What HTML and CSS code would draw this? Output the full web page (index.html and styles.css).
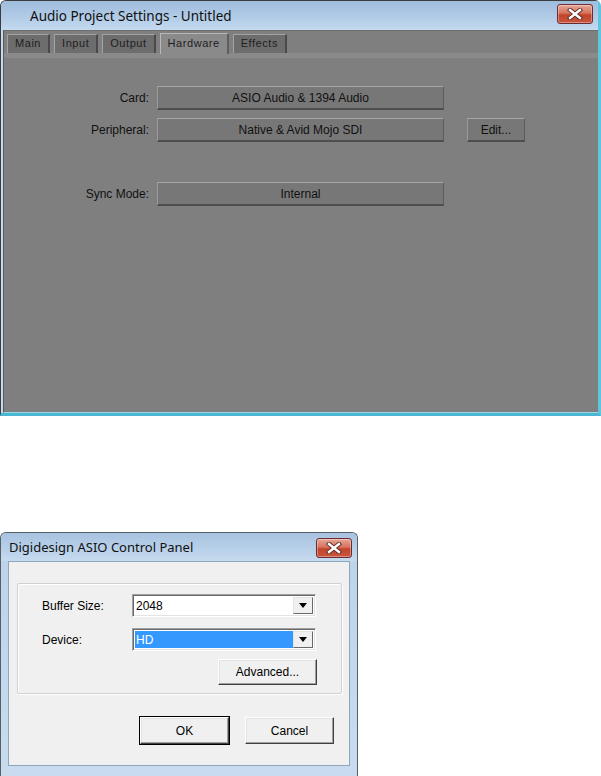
FILE: index.html
```html
<!DOCTYPE html>
<html>
<head>
  <meta charset="utf-8">
  <title>Audio Project Settings</title>
  <link rel="stylesheet" href="styles.css">
</head>
<body>

<div class="window avid">
  <div class="titlebar">
    <span class="title">Audio Project Settings - Untitled</span>
    <span class="close">
      <svg width="16" height="12" viewBox="0 0 16 12">
        <path d="M3 2 L13 10 M13 2 L3 10" stroke="#5a2a24" stroke-width="4.2" stroke-linecap="square"/>
        <path d="M3 2 L13 10 M13 2 L3 10" stroke="#ffffff" stroke-width="2.4" stroke-linecap="square"/>
      </svg>
    </span>
  </div>
  <div class="client">
    <div class="tabs">
      <span class="tab">Main</span>
      <span class="tab">Input</span>
      <span class="tab">Output</span>
      <span class="tab active">Hardware</span>
      <span class="tab">Effects</span>
    </div>
    <div class="settings">
      <div class="row">
        <span class="label">Card:</span>
        <span class="btn wide">ASIO Audio &amp; 1394 Audio</span>
      </div>
      <div class="row">
        <span class="label">Peripheral:</span>
        <span class="btn wide">Native &amp; Avid Mojo SDI</span>
        <span class="btn edit">Edit...</span>
      </div>
      <div class="row sync">
        <span class="label">Sync Mode:</span>
        <span class="btn wide">Internal</span>
      </div>
    </div>
  </div>
</div>

<div class="window asio">
  <div class="titlebar">
    <span class="title">Digidesign ASIO Control Panel</span>
    <span class="close">
      <svg width="16" height="12" viewBox="0 0 16 12">
        <path d="M3 2 L13 10 M13 2 L3 10" stroke="#5a2a24" stroke-width="4.2" stroke-linecap="square"/>
        <path d="M3 2 L13 10 M13 2 L3 10" stroke="#ffffff" stroke-width="2.4" stroke-linecap="square"/>
      </svg>
    </span>
  </div>
  <div class="client">
    <div class="group">
      <div class="field">
        <span class="flabel">Buffer Size:</span>
        <span class="combo"><span class="value">2048</span><span class="arrow"></span></span>
      </div>
      <div class="field">
        <span class="flabel">Device:</span>
        <span class="combo"><span class="value selected">HD</span><span class="arrow"></span></span>
      </div>
      <div class="advanced-row">
        <span class="wbtn advanced">Advanced...</span>
      </div>
    </div>
    <div class="actions">
      <span class="wbtn default">OK</span>
      <span class="wbtn">Cancel</span>
    </div>
  </div>
</div>

</body>
</html>
```

FILE: styles.css
```css
body {
  margin: 0;
  background: #ffffff;
  font-family: "Liberation Sans", Arial, sans-serif;
}

.window {
  box-sizing: border-box;
  border: 1px solid #4b5560;
  border-radius: 6px 6px 0 0;
}

.titlebar {
  display: flex;
  align-items: center;
  justify-content: space-between;
  background: linear-gradient(#9fbcdc, #b3cde8 60%, #c4daef);
}

.title {
  font-family: "Noto Sans", "Open Sans", sans-serif;
  color: #101010;
}

.close {
  display: flex;
  align-items: center;
  justify-content: center;
  box-sizing: border-box;
  border: 1px solid #6a2b35;
  border-radius: 3px;
  background: linear-gradient(#e7a797, #d6735d 45%, #c2442a 55%, #c9553c);
  box-shadow: inset 0 0 0 1px rgba(255, 255, 255, 0.35);
}

/* Avid settings window */

.avid {
  width: 601px;
  height: 416px;
  background: #c5d9ee;
  border-color: #3d3d3d;
  border-bottom: 3px solid #49b6d2;
  border-right: 3px solid #5cc6e0;
  display: flex;
  flex-direction: column;
}

.avid .titlebar {
  height: 29px;
  padding: 0 5px 0 29px;
  border-radius: 5px 5px 0 0;
}

.avid .title {
  font-size: 13.5px;
}

.avid .close {
  width: 36px;
  height: 20px;
  margin-top: -4px;
}

.avid .client {
  flex: 1;
  margin-left: 2px;
  background: #7f7f7f;
  border-left: 1px solid #5a5a5a;
  border-top: 1px solid #6e6e6e;
  border-bottom: 1px solid #9bd5e6;
}

.tabs {
  display: flex;
  gap: 4px;
  padding: 3px 0 0 3px;
  height: 19px;
  border-bottom: 5px solid #8a8a8a;
}

.tab {
  box-sizing: border-box;
  height: 19px;
  padding: 2px 7px 0 7px;
  font-size: 11px;
  letter-spacing: 0.55px;
  color: #1e1e1e;
  background: #6d6d6d;
  border-top: 1px solid #a3a3a3;
  border-left: 1px solid #a3a3a3;
  border-right: 2px solid #4a4a4a;
}

.tab.active {
  height: 21px;
  margin-top: -1px;
  padding-top: 3px;
  background: #8a8a8a;
  border-top-color: #b8b8b8;
  border-left-color: #b8b8b8;
  border-right-color: #5e5e5e;
}

.settings {
  padding-top: 28px;
  display: flex;
  flex-direction: column;
  gap: 8px;
}

.row {
  display: flex;
  align-items: center;
}

.row.sync {
  margin-top: 32px;
}

.label {
  width: 145px;
  margin-right: 8px;
  text-align: right;
  font-size: 12px;
  color: #111111;
}

.btn {
  box-sizing: border-box;
  height: 24px;
  display: flex;
  align-items: center;
  justify-content: center;
  font-size: 12px;
  color: #111111;
  background: #777777;
  border-top: 1px solid #a6a6a6;
  border-left: 1px solid #9a9a9a;
  border-right: 1px solid #5b5b5b;
  border-bottom: 2px solid #4e4e4e;
}

.btn.wide {
  width: 287px;
}

.btn.edit {
  width: 58px;
  margin-left: 23px;
}

/* ASIO control panel */

.asio {
  width: 358px;
  margin-top: 116px;
  height: 244px;
  background: linear-gradient(#bcd3ea, #c9dcef);
  border-color: #565e66;
  border-bottom: none;
  padding: 0 7px 10px 7px;
  display: flex;
  flex-direction: column;
}

.asio .titlebar {
  height: 28px;
  margin: 0 -7px;
  padding: 0 5px 0 8px;
  background: linear-gradient(#a8c3e0, #bcd3eb 70%, #c7dbef);
  border-radius: 5px 5px 0 0;
}

.asio .title {
  font-size: 13px;
}

.asio .close {
  width: 36px;
  height: 20px;
  margin-top: 2px;
}

.asio .client {
  flex: 1;
  background: #f0f0f0;
  border: 1px solid #8ea6bf;
  padding: 21px 7px 0 8px;
  font-size: 12px;
  color: #000000;
}

.group {
  box-sizing: border-box;
  height: 111px;
  border: 1px solid #d0d0d0;
  box-shadow: inset 1px 1px 0 #ffffff, 1px 1px 0 #ffffff;
  border-radius: 2px;
  padding: 10px 0 0 24px;
}

.field {
  display: flex;
  align-items: center;
  margin-bottom: 11px;
}

.flabel {
  width: 90px;
}

.combo {
  box-sizing: border-box;
  width: 184px;
  height: 23px;
  display: flex;
  padding: 2px;
  background: #ffffff;
  border-top: 1px solid #a0a0a0;
  border-left: 1px solid #a0a0a0;
  border-right: 1px solid #ffffff;
  border-bottom: 1px solid #ffffff;
  box-shadow: inset 1px 1px 0 #696969, inset -1px -1px 0 #e3e3e3;
}

.value {
  flex: 1;
  display: flex;
  align-items: center;
  padding-left: 1px;
}

.value.selected {
  background: #3399ff;
  color: #ffffff;
}

.arrow {
  box-sizing: border-box;
  width: 20px;
  display: flex;
  align-items: center;
  justify-content: center;
  background: #f0f0f0;
  border-top: 1px solid #e3e3e3;
  border-left: 1px solid #e3e3e3;
  border-right: 1px solid #696969;
  border-bottom: 1px solid #696969;
}

.arrow::after {
  content: "";
  border-left: 4px solid transparent;
  border-right: 4px solid transparent;
  border-top: 5px solid #000000;
}

.advanced-row {
  display: flex;
  padding-left: 176px;
  margin-top: -3px;
}

.wbtn {
  box-sizing: border-box;
  width: 89px;
  height: 27px;
  display: flex;
  align-items: center;
  justify-content: center;
  background: #f0f0f0;
  border-top: 1px solid #ffffff;
  border-left: 1px solid #ffffff;
  border-right: 1px solid #404040;
  border-bottom: 1px solid #404040;
  box-shadow: inset -1px -1px 0 #a0a0a0, inset 1px 1px 0 #e3e3e3;
}

.wbtn.advanced {
  width: 99px;
  height: 26px;
}

.wbtn.default {
  outline: 1px solid #000000;
}

.actions {
  display: flex;
  justify-content: flex-end;
  gap: 16px;
  padding: 23px 8px 0 0;
}
```
